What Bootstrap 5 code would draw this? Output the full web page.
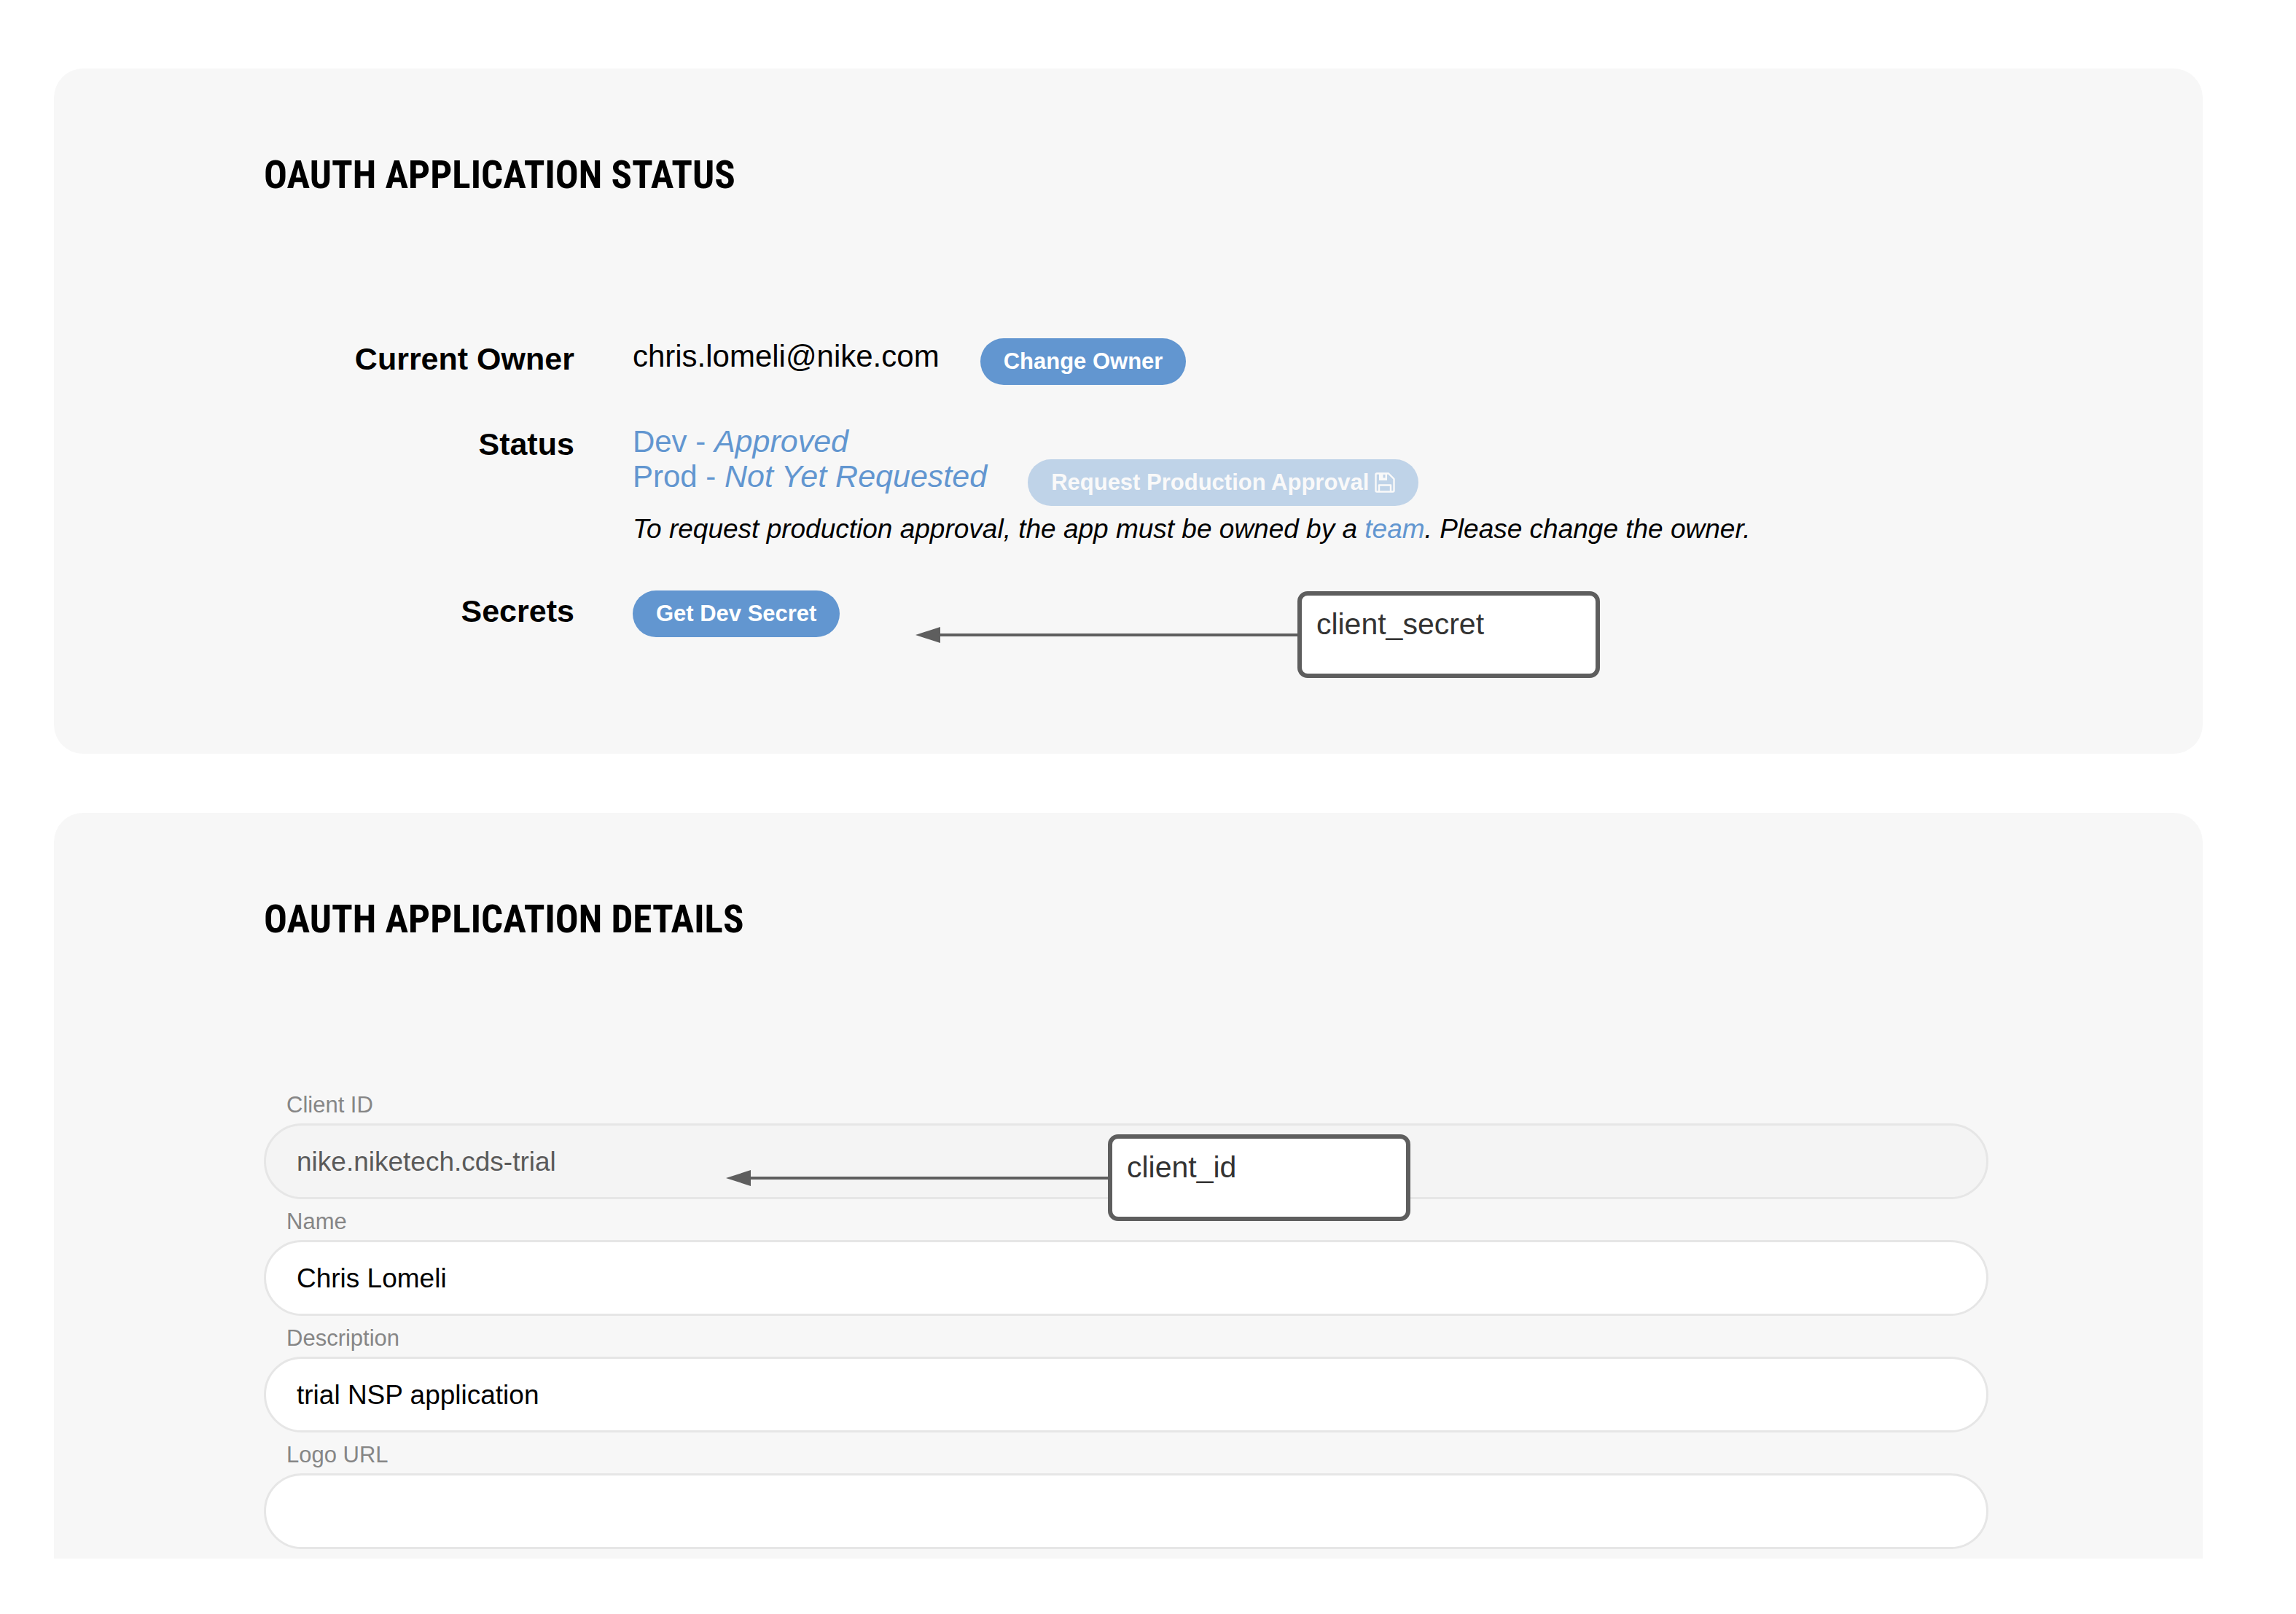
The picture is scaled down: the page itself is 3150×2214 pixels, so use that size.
<!DOCTYPE html>
<html lang="en">
<head>
<meta charset="utf-8">
<meta name="viewport" content="width=device-width, initial-scale=1">
<title>OAuth Application</title>
<link href="https://cdn.jsdelivr.net/npm/bootstrap@5.3.0/dist/css/bootstrap.min.css" rel="stylesheet">
<style>
body { font-family: "Liberation Sans", Arial, sans-serif; color: #000; background: #fff; }
.page { padding: 94px 128px 76px 74px; gap: 81px; }
.panel { background: #f7f7f7; border-radius: 40px; padding: 118px 294px 160px 288px; }
.panel-cut { border-radius: 40px 40px 0 0; padding-bottom: 13px; }
.panel-title { font-family: "Roboto Condensed", Roboto, "Liberation Sans", sans-serif; font-weight: 700; font-size: 53px; line-height: 56px; margin: 0 0 196px; }
.facts { gap: 53px; }
.fact-label { flex: 0 0 18%; font-size: 43px; line-height: 48px; padding-top: 4px; }
.fact-value { margin-left: 80px; font-size: 42px; line-height: 48px; }
.fact-value em { font-size: 43px; line-height: 1; }
.fact-text { padding-top: 1px; }
.with-action { gap: 56px; }
.blue-text, .blue-text:hover { color: #6296d0; }
.note { font-size: 37px; margin: 8px 0 7px; }
.btn-pill { --bs-btn-color: #fff; --bs-btn-bg: #6296d0; --bs-btn-hover-color: #fff; --bs-btn-hover-bg: #4f84c0; --bs-btn-disabled-color: #fff; --bs-btn-disabled-bg: #6296d0; --bs-btn-disabled-opacity: .37; --bs-btn-font-weight: 700; --bs-btn-font-size: 31px; --bs-btn-line-height: 40px; --bs-btn-padding-x: 32px; --bs-btn-padding-y: 12px; --bs-btn-border-width: 0; }
.save-icon { width: 28px; height: 28px; }
.field-label { font-size: 31px; line-height: 40px; padding: 11px 0 5px 31px; color: #868686; }
.field-box { height: 104px; border: 3px solid #e6e6e6; padding: 2px 42px 0; font-size: 37px; color: #000; background: #fff; }
.field-box:disabled { background: #f4f4f4; color: #5a5a5a; }
.callout { z-index: 2; }
.callout-secret { left: 388px; top: 1px; }
.callout-id { left: 634px; top: 15px; }
.callout-arrow { width: 524px; height: 24px; }
.callout-box { width: 415px; height: 119px; border: 6px solid #5e5e5e; border-radius: 14px; background: #fff; color: #333; font-size: 41px; line-height: 48px; padding: 15px 20px; }
</style>
</head>
<body>
<main class="page d-flex flex-column">
  <section class="panel">
    <h2 class="panel-title">OAUTH APPLICATION STATUS</h2>
    <div class="facts d-flex flex-column">
      <div class="d-flex align-items-start">
        <div class="fact-label fw-bold text-end">Current Owner</div>
        <div class="fact-value with-action d-flex align-items-start">
          <span class="fact-text">chris.lomeli@nike.com</span>
          <button type="button" class="btn btn-pill rounded-pill">Change Owner</button>
        </div>
      </div>
      <div class="d-flex align-items-start">
        <div class="fact-label fw-bold text-end">Status</div>
        <div class="fact-value">
          <div class="fact-text blue-text">Dev - <em>Approved</em></div>
          <div class="with-action d-flex align-items-start">
            <span class="blue-text">Prod - <em>Not Yet Requested</em></span>
            <button type="button" class="btn btn-pill rounded-pill d-flex align-items-center gap-2" disabled>Request Production Approval
              <svg class="save-icon" viewBox="0 0 28 28" fill="none" stroke="currentColor" stroke-width="2.4" stroke-linejoin="round" aria-hidden="true">
                <path d="M3 1.500H19L26.500 9V25Q26.500 26.500 25 26.500H3Q1.500 26.500 1.500 25V3Q1.500 1.500 3 1.500Z"/>
                <path d="M6 1H17V11H6ZM11.500 3V7.500H14.500V3Z" fill="currentColor" fill-rule="evenodd" stroke="none"/>
                <path d="M6 26V17.500H22V26"/>
              </svg>
            </button>
          </div>
          <p class="note fst-italic">To request production approval, the app must be owned by a <a href="#" class="blue-text text-decoration-none">team</a>. Please change the owner.</p>
        </div>
      </div>
      <div class="d-flex align-items-start">
        <div class="fact-label fw-bold text-end">Secrets</div>
        <div class="fact-value position-relative d-flex">
          <button type="button" class="btn btn-pill rounded-pill text-nowrap">Get Dev Secret</button>
          <div class="callout callout-secret position-absolute d-flex align-items-center">
            <svg class="callout-arrow flex-shrink-0" viewBox="0 0 524 24" fill="#5e5e5e" aria-hidden="true"><path d="M0 12L34 1V23Z"/><path d="M32 10H524V14H32Z"/></svg>
            <div class="callout-box flex-shrink-0">client_secret</div>
          </div>
        </div>
      </div>
    </div>
  </section>

  <section class="panel panel-cut">
    <h2 class="panel-title">OAUTH APPLICATION DETAILS</h2>
    <form>
      <label for="client-id" class="field-label d-block">Client ID</label>
      <div class="position-relative">
        <input id="client-id" type="text" class="field-box form-control rounded-pill" value="nike.niketech.cds-trial" disabled>
        <div class="callout callout-id position-absolute d-flex align-items-center">
          <svg class="callout-arrow flex-shrink-0" viewBox="0 0 524 24" fill="#5e5e5e" aria-hidden="true"><path d="M0 12L34 1V23Z"/><path d="M32 10H524V14H32Z"/></svg>
          <div class="callout-box flex-shrink-0">client_id</div>
        </div>
      </div>
      <label for="app-name" class="field-label d-block">Name</label>
      <input id="app-name" type="text" class="field-box form-control rounded-pill" value="Chris Lomeli">
      <label for="app-description" class="field-label d-block">Description</label>
      <input id="app-description" type="text" class="field-box form-control rounded-pill" value="trial NSP application">
      <label for="logo-url" class="field-label d-block">Logo URL</label>
      <input id="logo-url" type="text" class="field-box form-control rounded-pill">
    </form>
  </section>
</main>
<script src="https://cdn.jsdelivr.net/npm/bootstrap@5.3.0/dist/js/bootstrap.bundle.min.js"></script>
</body>
</html>
